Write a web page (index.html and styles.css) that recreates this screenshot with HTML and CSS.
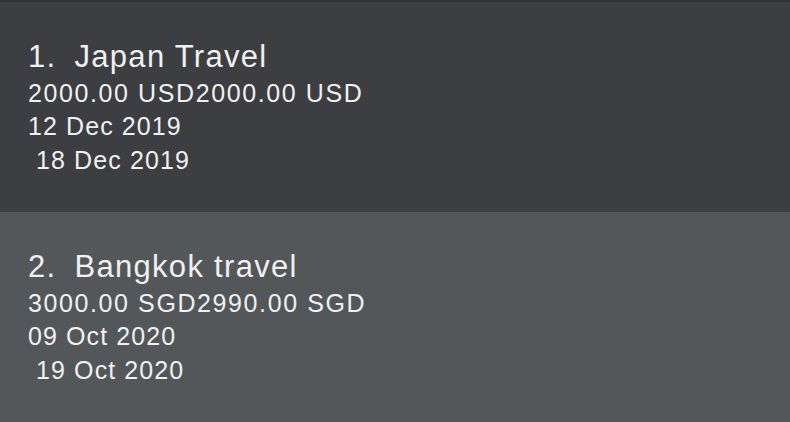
FILE: index.html
```html
<!DOCTYPE html>
<html>
<head>
<meta charset="utf-8">
<link rel="stylesheet" href="styles.css">
</head>
<body>
<div class="list">
  <div class="card card-dark">
    <div class="title"><span class="idx">1.</span><span class="name">Japan Travel</span></div>
    <div class="line amount">2000.00 USD2000.00 USD</div>
    <div class="line date">12 Dec 2019</div>
    <div class="line date"> 18 Dec 2019</div>
  </div>
  <div class="card card-light">
    <div class="title"><span class="idx">2.</span><span class="name">Bangkok travel</span></div>
    <div class="line amount">3000.00 SGD2990.00 SGD</div>
    <div class="line date">09 Oct 2020</div>
    <div class="line date"> 19 Oct 2020</div>
  </div>
</div>
</body>
</html>
```
FILE: styles.css
```css
html, body {
  margin: 0;
  padding: 0;
  background: #3c3e41;
}
.list {
  display: flex;
  flex-direction: column;
  border-top: 2px solid #303234;
  font-family: "Liberation Sans", Arial, sans-serif;
  color: #f0f0f0;
}
.card {
  height: 210px;
  box-sizing: border-box;
  padding: 34.5px 0 0 28px;
  display: flex;
  flex-direction: column;
}
.card-dark { background: #3c3e41; }
.card-light { background: #53575a; }
.title {
  display: flex;
  gap: 18px;
  font-size: 31px;
  line-height: 40px;
  letter-spacing: 1.3px;
}
.line {
  font-size: 25px;
  line-height: 33.7px;
  white-space: pre;
}
.amount { letter-spacing: 1.6px; }
.date { letter-spacing: 1.1px; }
```
